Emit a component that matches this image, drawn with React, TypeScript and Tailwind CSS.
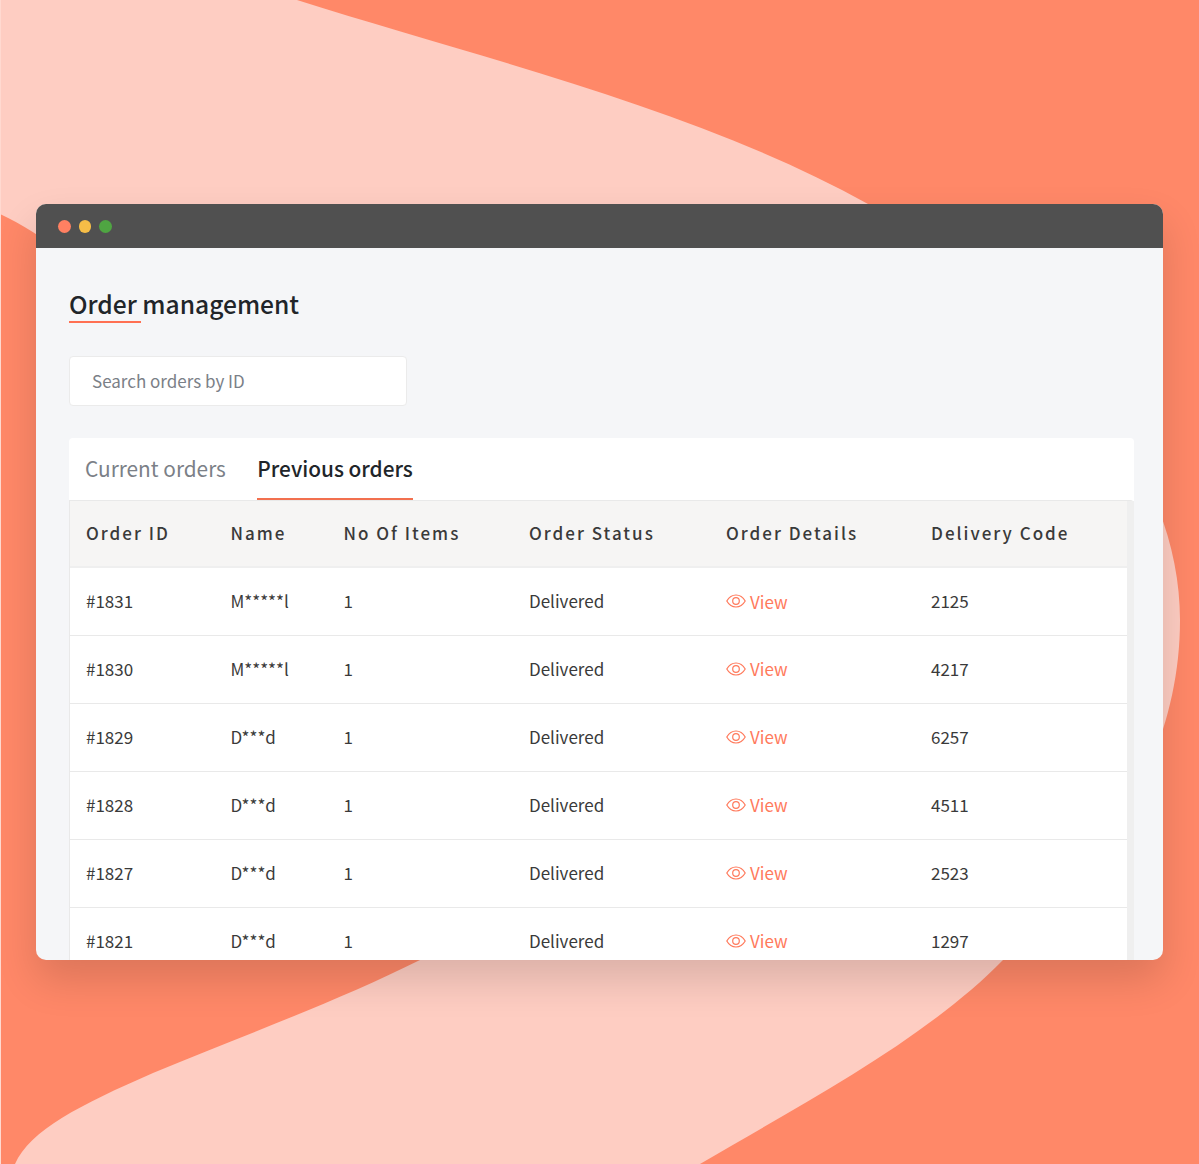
import React from "react";

const rows = [
  ["#1831", "M*****l", "1", "Delivered", "2125"],
  ["#1830", "M*****l", "1", "Delivered", "4217"],
  ["#1829", "D***d", "1", "Delivered", "6257"],
  ["#1828", "D***d", "1", "Delivered", "4511"],
  ["#1827", "D***d", "1", "Delivered", "2523"],
  ["#1821", "D***d", "1", "Delivered", "1297"],
];

const headers = ["Order ID", "Name", "No Of Items", "Order Status", "Order Details", "Delivery Code"];

function Eye() {
  return (
    <svg width="20" height="14" viewBox="0 0 20 14" fill="none" stroke="#ff7a5c" strokeWidth="1.2" className="shrink-0">
      <path d="M0.8 7C3 3.2 6.2 1 10 1S17 3.2 19.2 7C17 10.8 13.8 13 10 13S3 10.8 0.8 7Z" />
      <circle cx="10" cy="7" r="3.3" />
    </svg>
  );
}

export default function App() {
  return (
    <div
      className="relative w-[1199px] h-[1164px] overflow-hidden bg-[#ff8868] pt-[204px] pl-[36px]"
      style={{ fontFamily: '"Noto Sans CJK SC", "Noto Sans", sans-serif' }}
    >
      <svg className="absolute left-0 top-0" width="1199" height="1164" viewBox="0 0 1199 1164">
        <path
          d="M0 0L297 0C480 58 700 110 868 204C1060 320 1180 470 1180 620C1180 760 1100 870 1003 960C925 1040 800 1105 700 1164L15 1164C30 1130 80 1105 153 1073C250 1033 340 1000 420 960C300 500 140 280 0 214Z"
          fill="#fecdc2"
        />
        <rect x="0" y="0" width="1" height="1164" fill="#ffd9d0" />
      </svg>

      <div className="relative w-[1127px] h-[756px] overflow-hidden rounded-[10px] bg-[#f5f6f8] shadow-[0_20px_40px_rgba(0,0,0,0.14)]">
        <div className="flex h-[44px] items-center gap-[8px] bg-[#505050] pl-[22px] pt-[1px]">
          <span className="h-[12.5px] w-[12.5px] rounded-full bg-[#ff8062]" />
          <span className="h-[12.5px] w-[12.5px] rounded-full bg-[#f6bd47]" />
          <span className="h-[12.5px] w-[12.5px] rounded-full bg-[#4fa542]" />
        </div>

        <div className="pl-[33px] pr-[29px]">
          <div className="pt-[37px]">
            <h1 className="relative inline-block text-[24.6px] leading-[36px] font-medium text-[#212529]">
              Order management
              <span className="absolute left-0 top-[36px] h-[2px] w-[72px] bg-[#ff7052]" />
            </h1>
          </div>

          <div className="mt-[35px] flex h-[50px] w-[338px] items-center rounded-[4px] border border-[#ebebeb] bg-white pl-[22px] text-[17px] text-[#7b8087]">
            Search orders by ID
          </div>

          <div className="mt-[32px] h-[600px] rounded-t-[4px] bg-white">
            <div className="flex h-[62px] gap-[31.5px] pl-[16px] text-[20.8px]">
              <div className="pt-[14px] leading-[32px] text-[#7b8087]">Current orders</div>
              <div className="h-[62px] border-b-2 border-[#f2704f] pt-[14px] leading-[32px] font-medium text-[#212529]">
                Previous orders
              </div>
            </div>

            <div className="flex h-[500px] rounded-tr-[4px] border-t border-l border-[#e9e9e9]">
              <table className="w-[1057px] table-fixed border-collapse self-start text-left text-[17px] text-[#3a3a3a]">
                <colgroup>
                  <col className="w-[144.5px]" />
                  <col className="w-[113px]" />
                  <col className="w-[185.5px]" />
                  <col className="w-[197px]" />
                  <col className="w-[205px]" />
                  <col />
                </colgroup>
                <thead>
                  <tr className="h-[66px] border-b-2 border-[#efefef] bg-[#f6f5f4]">
                    {headers.map((h) => (
                      <th key={h} className="pl-[16px] pb-[2px] text-[17px] font-medium tracking-[2px] text-[#3a3a3a]">
                        {h}
                      </th>
                    ))}
                  </tr>
                </thead>
                <tbody>
                  {rows.map((r) => (
                    <tr key={r[0]} className="h-[68px] border-b border-[#e9e9e9]">
                      <td className="pl-[16px] pb-[1px]">{r[0]}</td>
                      <td className="pl-[16px] pb-[1px]">{r[1]}</td>
                      <td className="pl-[16px] pb-[1px]">{r[2]}</td>
                      <td className="pl-[16px] pb-[1px]">{r[3]}</td>
                      <td className="pl-[16px]">
                        <span className="flex items-center gap-[4px] text-[#ff7a5c]">
                          <Eye />
                          View
                        </span>
                      </td>
                      <td className="pl-[16px] pb-[1px]">{r[4]}</td>
                    </tr>
                  ))}
                </tbody>
              </table>
              <div className="w-[7px] shrink-0 bg-[#efefef]" />
            </div>
          </div>
        </div>
      </div>
    </div>
  );
}
